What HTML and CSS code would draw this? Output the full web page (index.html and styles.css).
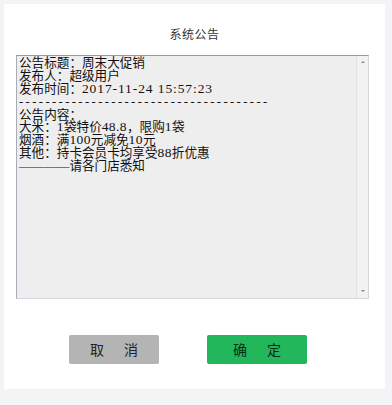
FILE: index.html
```html
<!DOCTYPE html>
<html lang="zh-CN">
<head>
<meta charset="utf-8">
<title>系统公告</title>
<link rel="stylesheet" href="styles.css">
</head>
<body>
<div class="dialog">
  <div class="title">系统公告</div>
  <div class="box">
    <div class="content">
      <div class="line">公告标题：周末大促销</div>
      <div class="line">发布人：超级用户</div>
      <div class="line">发布时间：<span class="wide">2017-11-24 15:57:23</span></div>
      <div class="line sep">--------------------------------------</div>
      <div class="line">公告内容：</div>
      <div class="line">大米：<span class="n">1</span>袋特价<span class="n">48.8</span>，限购<span class="n">1</span>袋</div>
      <div class="line">烟酒：满<span class="n">100</span>元减免<span class="n">10</span>元</div>
      <div class="line">其他：持卡会员卡均享受<span class="n">88</span>折优惠</div>
      <div class="line">————请各门店悉知</div>
    </div>
    <div class="scrollbar">
      <span class="arrow up"></span>
      <span class="arrow down"></span>
    </div>
  </div>
  <div class="actions">
    <div class="btn cancel">取消</div>
    <div class="btn ok">确定</div>
  </div>
</div>
</body>
</html>
```
FILE: styles.css
```css
html, body {
  margin: 0;
  padding: 0;
  background: #f4f4f6;
}
body {
  padding: 4px 7px 16px 4px;
  font-family: "Liberation Serif", "Noto Sans CJK SC", serif;
}
.dialog {
  background: #ffffff;
  height: 385px;
  box-sizing: border-box;
  padding: 22px 0 0 12px;
}
.title {
  font-family: "Noto Sans CJK SC", sans-serif;
  font-size: 12px;
  letter-spacing: 0.5px;
  line-height: 16px;
  height: 16px;
  color: #333;
  text-align: center;
  padding-right: 12px;
  margin-bottom: 13px;
}
.box {
  width: 353px;
  height: 244px;
  box-sizing: border-box;
  border: 1px solid #d4d6da;
  border-top-color: #8f9cab;
  border-left-color: #a6adb6;
  background: #eeeeef;
  display: flex;
}
.content {
  flex: 1;
  padding: 1px 0 0 2px;
  font-size: 12.6px;
  line-height: 12.9px;
  color: #111;
}
.line {
  height: 12.9px;
  line-height: 12.9px;
  white-space: nowrap;
}
.n {
  font-size: 13.5px;
  line-height: 12px;
  letter-spacing: 0.4px;
}
.wide {
  font-size: 13.5px;
  line-height: 12px;
  letter-spacing: 0.9px;
}
.sep {
  letter-spacing: 2.4px;
  line-height: 10px;
}
.scrollbar {
  width: 11px;
  border-left: 1px solid #e2e2e4;
  background: #f2f2f3;
  display: flex;
  flex-direction: column;
  justify-content: space-between;
  align-items: center;
  padding: 5px 0 6px;
}
.arrow {
  width: 0;
  height: 0;
  border-left: 2px solid transparent;
  border-right: 2px solid transparent;
}
.arrow.up {
  border-bottom: 2px solid #888;
}
.arrow.down {
  border-top: 2px solid #888;
}
.actions {
  display: flex;
  gap: 48px;
  padding: 36px 0 0 53px;
}
.btn {
  height: 29px;
  line-height: 29px;
  border-radius: 2px;
  font-family: "Noto Sans CJK SC", sans-serif;
  font-size: 14px;
  letter-spacing: 20px;
  text-indent: 20px;
  text-align: center;
}
.cancel {
  width: 90px;
  background: #b4b4b5;
  color: #222;
}
.ok {
  width: 100px;
  background: #21b75a;
  color: #0e2a17;
}
```
